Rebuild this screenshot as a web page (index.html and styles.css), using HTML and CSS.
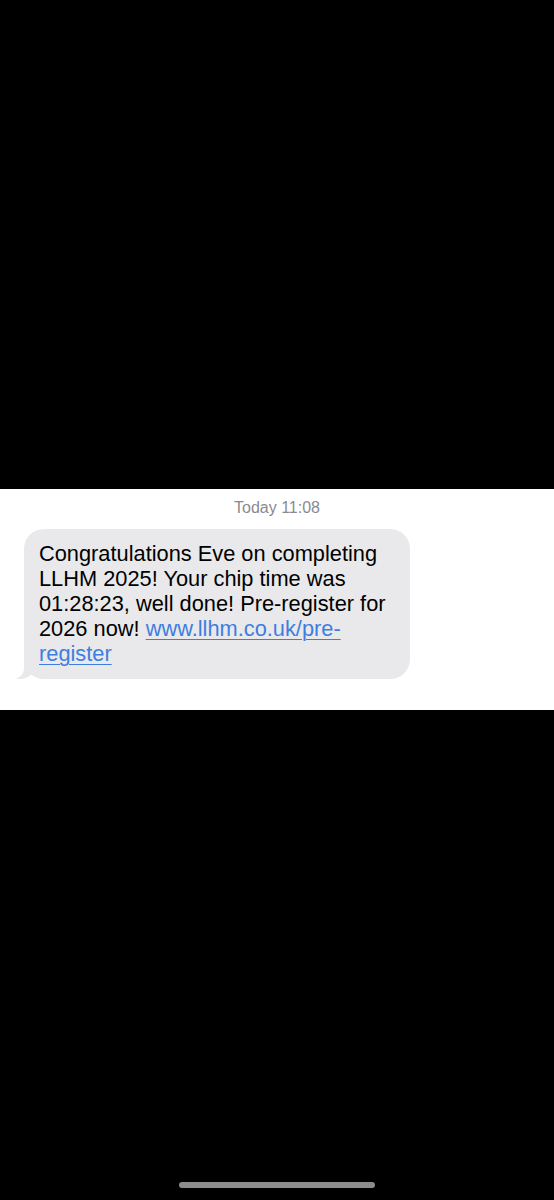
FILE: index.html
```html
<!DOCTYPE html>
<html lang="en">
<head>
    <meta charset="UTF-8">
    <title>Messages</title>
    <link rel="stylesheet" href="styles.css">
</head>
<body>
    <div class="screen">
        <div class="blank-top"></div>
        <section class="thread">
            <div class="stamp">Today 11:08</div>
            <div class="bubble">
                <p class="msg">Congratulations Eve on completing<br>LLHM 2025! Your chip time was<br>01:28:23, well done! Pre-register for<br>2026 now! <a href="#">www.llhm.co.uk/pre-<br>register</a></p>
                <svg class="tail" width="20" height="20" viewBox="0 0 20 20">
                    <path d="M10 0 V9 C10 14 7 18 1 20 C8 20.6 13 19 17 16 L20 0 Z" fill="#e9e9eb"/>
                </svg>
            </div>
        </section>
        <div class="blank-bottom">
            <div class="home-bar"></div>
        </div>
    </div>
</body>
</html>
```

FILE: styles.css
```css
body {
    margin: 0;
    padding: 0;
    background: #000;
    font-family: "Liberation Sans", Arial, sans-serif;
}
.screen {
    height: 1200px;
    display: flex;
    flex-direction: column;
}
.blank-top {
    height: 489px;
    background: #000;
}
.thread {
    height: 221px;
    background: #fff;
    padding-top: 10px;
    box-sizing: border-box;
}
.stamp {
    text-align: center;
    font-size: 16px;
    line-height: 18px;
    color: #8a8a8e;
    margin-bottom: 12px;
}
.bubble {
    position: relative;
    width: 386px;
    margin-left: 24px;
    box-sizing: border-box;
    padding: 12px 14px 13px 15px;
    background: #e9e9eb;
    border-radius: 20px;
}
.msg {
    margin: 0;
    font-size: 21.8px;
    line-height: 25px;
    color: #000;
}
.msg a {
    color: #3e7ee0;
    text-decoration: underline;
    text-underline-offset: 3px;
    text-decoration-thickness: 1px;
}
.tail {
    position: absolute;
    left: -10px;
    bottom: 0;
}
.blank-bottom {
    flex: 1;
    display: flex;
    justify-content: center;
    align-items: flex-end;
    padding-bottom: 12px;
}
.home-bar {
    width: 196px;
    height: 6px;
    border-radius: 3px;
    background: #8c8c8c;
}
```
